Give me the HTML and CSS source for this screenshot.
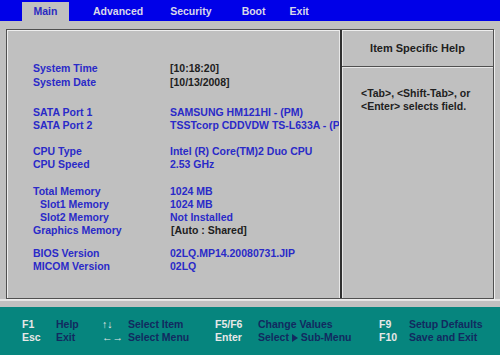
FILE: index.html
```html
<!DOCTYPE html>
<html lang="en">
<head>
    <meta charset="UTF-8">
    <meta name="viewport" content="width=device-width, initial-scale=1.0">
    <title>BIOS Setup - Main</title>
    <link rel="stylesheet" href="styles.css">
</head>
<body>
    <div class="screen">
        <div class="menubar">
            <div class="tab active">Main</div>
            <div class="tab">Advanced</div>
            <div class="tab">Security</div>
            <div class="tab">Boot</div>
            <div class="tab">Exit</div>
        </div>

        <div class="workspace">
            <div class="frame">
                <div class="info">
                    <div class="group g1">
                        <div class="row"><span class="label">System Time</span><span class="value field">[10:18:20]</span></div>
                        <div class="row"><span class="label">System Date</span><span class="value field">[10/13/2008]</span></div>
                    </div>
                    <div class="group g2">
                        <div class="row"><span class="label">SATA Port 1</span><span class="value">SAMSUNG HM121HI - (PM)</span></div>
                        <div class="row"><span class="label">SATA Port 2</span><span class="value">TSSTcorp CDDVDW TS-L633A - (PM)</span></div>
                    </div>
                    <div class="group g3">
                        <div class="row"><span class="label">CPU Type</span><span class="value">Intel (R) Core(TM)2 Duo CPU</span></div>
                        <div class="row"><span class="label">CPU Speed</span><span class="value">2.53 GHz</span></div>
                    </div>
                    <div class="group g4">
                        <div class="row"><span class="label">Total Memory</span><span class="value">1024 MB</span></div>
                        <div class="row"><span class="label sub">Slot1 Memory</span><span class="value">1024 MB</span></div>
                        <div class="row"><span class="label sub">Slot2 Memory</span><span class="value">Not Installed</span></div>
                        <div class="row"><span class="label">Graphics Memory</span><span class="value field shift">[Auto : Shared]</span></div>
                    </div>
                    <div class="group g5">
                        <div class="row"><span class="label">BIOS Version</span><span class="value">02LQ.MP14.20080731.JIP</span></div>
                        <div class="row"><span class="label">MICOM Version</span><span class="value">02LQ</span></div>
                    </div>
                </div>
                <div class="help">
                    <div class="help-title">Item Specific Help</div>
                    <div class="help-text">&lt;Tab&gt;, &lt;Shift-Tab&gt;, or<br>&lt;Enter&gt; selects field.</div>
                </div>
            </div>
        </div>

        <div class="keys">
            <span class="key">F1</span><span class="desc">Help</span>
            <span class="key">&uarr;&darr;</span><span class="desc">Select Item</span>
            <span class="key">F5/F6</span><span class="desc">Change Values</span>
            <span class="key">F9</span><span class="desc">Setup Defaults</span>
            <span class="key">Esc</span><span class="desc">Exit</span>
            <span class="key">&larr;&rarr;</span><span class="desc">Select Menu</span>
            <span class="key">Enter</span><span class="desc">Select <svg class="tri" width="6" height="8" viewBox="0 0 6 8"><polygon points="0,0 6,4 0,8"/></svg> Sub-Menu</span>
            <span class="key">F10</span><span class="desc">Save and Exit</span>
        </div>
    </div>
</body>
</html>
```

FILE: styles.css
```css
body {
    margin: 0;
    padding: 0;
    font-family: "Liberation Sans", Arial, sans-serif;
    font-weight: bold;
    font-size: 10.5px;
    background-color: #c0c0c0;
}
.screen {
    width: 500px;
    height: 355px;
    display: flex;
    flex-direction: column;
}
.menubar {
    height: 21px;
    flex-shrink: 0;
    background-color: #0000e8;
    display: flex;
    align-items: flex-end;
    padding-left: 22px;
}
.tab {
    height: 19px;
    line-height: 19px;
    color: #d8d8e8;
}
.tab.active {
    width: 47px;
    text-align: center;
    background-color: #c0c0c0;
    color: #2a2ac0;
}
.tab:nth-child(2) {
    margin-left: 24px;
}
.tab:nth-child(3) {
    margin-left: 27px;
}
.tab:nth-child(4) {
    margin-left: 30px;
}
.tab:nth-child(5) {
    margin-left: 24px;
}
.workspace {
    height: 270px;
    flex-shrink: 0;
    padding: 8px 6px 0 6px;
    border-bottom: 2px solid #e4e4e4;
}
.frame {
    height: 268px;
    border: 1px solid #505050;
    box-shadow: inset 1px 1px 0 #eeeeee, 1px 1px 0 #eeeeee;
    display: flex;
}
.info {
    width: 333px;
    padding: 31px 0 0 26px;
    box-sizing: border-box;
    overflow: hidden;
    white-space: nowrap;
    color: #2a2ac8;
}
.help {
    flex: 1;
    border-left: 2px solid #303030;
    box-shadow: -1px 0 0 #e8e8e8, inset 1px 0 0 #e8e8e8;
    color: #202020;
}
.help-title {
    height: 36px;
    line-height: 36px;
    text-align: center;
    font-size: 11px;
    border-bottom: 1px solid #505050;
    box-shadow: 0 1px 0 #e8e8e8;
}
.help-text {
    padding: 20px 0 0 19px;
    line-height: 13px;
}
.row {
    height: 13px;
    line-height: 13px;
    display: flex;
}
.g1 .row {
    height: 14px;
    line-height: 14px;
}
.g2 {
    margin-top: 17px;
}
.g3 {
    margin-top: 13px;
}
.g4 {
    margin-top: 14px;
}
.g5 {
    margin-top: 10px;
}
.label {
    width: 137px;
    flex-shrink: 0;
}
.label.sub {
    padding-left: 7px;
    box-sizing: border-box;
}
.field {
    color: #202020;
}
.shift {
    padding-left: 1px;
}
.keys {
    flex: 1;
    margin-top: 6px;
    background-color: #06857e;
    display: grid;
    grid-template-columns: 34px 46px 26px 87px 43px 121px 30px auto;
    grid-auto-rows: 13px;
    align-content: start;
    padding: 11px 0 0 22px;
    line-height: 13px;
}
.key {
    color: #e8e8e8;
}
.desc {
    color: #122a60;
}
.tri {
    fill: #122a60;
    vertical-align: -1px;
}
```
